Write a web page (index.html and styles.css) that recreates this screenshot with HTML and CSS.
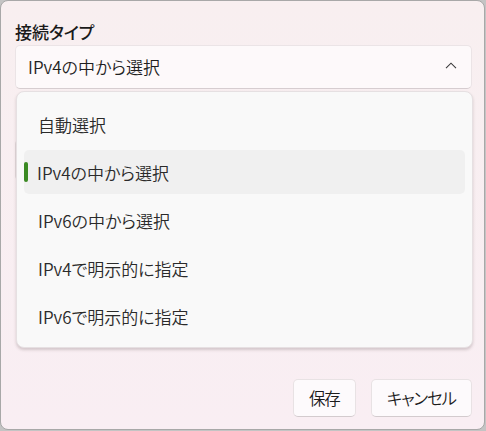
FILE: index.html
```html
<!DOCTYPE html>
<html lang="ja">
<head>
<meta charset="utf-8">
<title>接続タイプ</title>
<link rel="stylesheet" href="styles.css">
</head>
<body>
<div class="dialog">
  <div class="field">
    <div class="label">接続タイプ</div>
    <div class="combo">
      <span class="combo-text">IPv4の中から選択</span>
      <svg class="chevron" width="12" height="7" viewBox="0 0 12 7"><path d="M1 6.2 L6 1.2 L11 6.2" fill="none" stroke="#3a3a3a" stroke-width="1.1"/></svg>
    </div>
  </div>
  <div class="field under">
    <div class="label-stub"></div>
    <div class="input"></div>
  </div>
  <div class="footer">
    <button class="btn">保存</button>
    <button class="btn">キャンセル</button>
  </div>

  <div class="flyout">
    <div class="item">自動選択</div>
    <div class="item selected">IPv4の中から選択</div>
    <div class="item">IPv6の中から選択</div>
    <div class="item">IPv4で明示的に指定</div>
    <div class="item">IPv6で明示的に指定</div>
  </div>
</div>
</body>
</html>
```
FILE: styles.css
```css
* { box-sizing: border-box; }
html, body {
  margin: 0;
  padding: 0;
  background: #c4c4c4;
  width: 486px;
  height: 431px;
  overflow: hidden;
}
body {
  font-family: "Noto Sans CJK JP", "Noto Sans", sans-serif;
  font-feature-settings: "palt";
  color: #1c1c1c;
}
.dialog {
  position: relative;
  width: 485px;
  height: 430px;
  border: 1px solid #a8a8a8;
  border-radius: 8px;
  background: linear-gradient(180deg, #f8eff0 0%, #f9eef3 100%);
  padding: 19px 12px 12px 14px;
  display: flex;
  flex-direction: column;
}
.field { display: flex; flex-direction: column; }
.label {
  font-size: 17px;
  font-weight: 500;
  line-height: 24px;
  height: 25px;
  color: #1a1a1a;
}
.combo {
  height: 44px;
  width: 457px;
  border: 1px solid #ebe4e6;
  border-bottom-color: #d6cdd0;
  border-radius: 5px;
  background: #fdf9fa;
  display: flex;
  align-items: center;
  padding: 0 14px 0 12px;
}
.combo-text {
  flex: 1;
  font-size: 17px;
  font-weight: 350;
  line-height: 24px;
  color: #1f1f1f;
}
.chevron { display: block; margin-top: -3px; }

.under { margin-top: 31px; }
.label-stub {
  width: 2px;
  height: 13px;
  background: #2a2a2a;
  margin-left: 1px;
  margin-bottom: 6px;
}
.input {
  height: 42px;
  width: 457px;
  border: 1px solid #e2dadc;
  border-radius: 5px;
  background: #fdf9fa;
}

.footer {
  margin-top: auto;
  display: flex;
  justify-content: flex-end;
  gap: 15px;
}
.btn {
  height: 38px;
  padding: 0 15px;
  border: 1px solid #e8e2e4;
  border-bottom-color: #d3cbce;
  border-radius: 5px;
  background: #fdfafc;
  font-family: inherit;
  font-feature-settings: "palt";
  font-size: 16.5px;
  font-weight: 350;
  letter-spacing: -1.1px;
  color: #1c1c1c;
}

.flyout {
  position: absolute;
  left: 15px;
  top: 90px;
  width: 457px;
  height: 257px;
  background: #f9f9f9;
  border: 1px solid #e6e0e2;
  border-radius: 8px;
  box-shadow: 0 2px 3px rgba(80, 60, 65, 0.22);
  padding: 10px 7px 0 7px;
  display: flex;
  flex-direction: column;
  gap: 4px;
}
.item {
  position: relative;
  height: 44px;
  border-radius: 5px;
  padding-left: 14px;
  display: flex;
  align-items: center;
  font-size: 17px;
  font-weight: 350;
  color: #2a2a2a;
}
.item.selected { background: #f0f0f0; padding-left: 13px; }
.item.selected::before {
  content: "";
  position: absolute;
  left: 0;
  top: 12px;
  width: 4px;
  height: 20px;
  border-radius: 2px;
  background: #3b8a23;
}
```
